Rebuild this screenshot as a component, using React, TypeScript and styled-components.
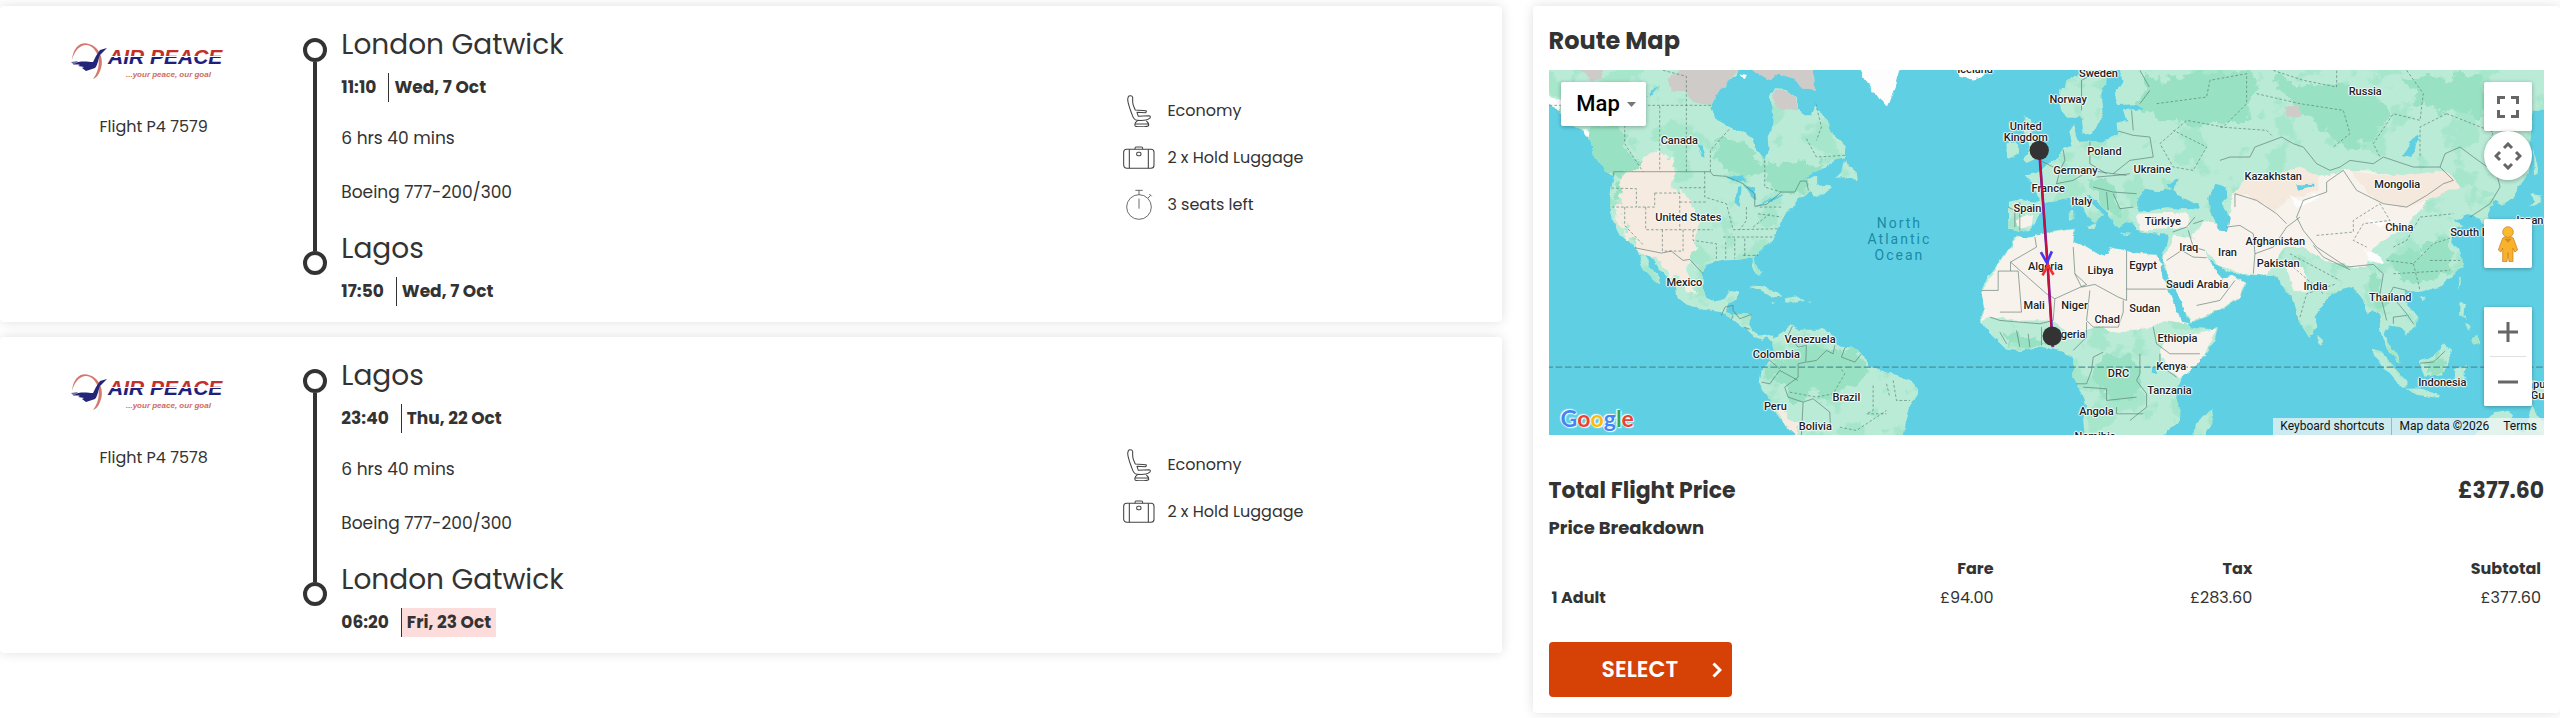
import React from "react";
import styled, { createGlobalStyle } from "styled-components";

const GlobalStyle = createGlobalStyle`
  * { box-sizing: border-box; }
  body {
    margin: 0;
    background: #fff;
    color: #333;
    font-family: Poppins, Inter, "Liberation Sans", sans-serif;
    font-size: 17px;
    line-height: 30px;
  }
  h2, h3, p, ul, dl { margin: 0; padding: 0; }
  button { font: inherit; border: 0; cursor: pointer; }
`;

const Page = styled.main`
  display: grid;
  grid-template-columns: minmax(0, 19fr) minmax(0, 13fr);
  gap: 31px;
  align-items: start;
  padding: 6px 0 5px;
`;

const Flights = styled.div`
  display: flex;
  flex-direction: column;
  gap: 15px;
`;

const Card = styled.section`
  background: #fff;
  border-radius: 4px;
  box-shadow: 0 0 12px rgba(0, 0, 0, 0.13);
`;

const FlightCard = styled(Card)`
  display: grid;
  grid-template-columns: 81fr 219fr 101fr;
`;

const Carrier = styled.div`
  display: flex;
  flex-direction: column;
  align-items: center;
  gap: 25px;
  padding-top: 24px;
`;

const FlightNumber = styled.p`
  padding-left: 4px;
  font-size: 16px;
  line-height: 24px;
`;

const Journey = styled.div`
  display: flex;
  gap: 14px;
`;

const Rail = styled.div`
  display: flex;
  flex-direction: column;
  align-items: center;
  margin: 32px 0 47px;
`;

const Stop = styled.span`
  width: 24px;
  height: 24px;
  border: 4px solid #333;
  border-radius: 50%;
`;

const RailLine = styled.span`
  flex: 1;
  width: 4px;
  background: #333;
`;

const Legs = styled.div`
  display: flex;
  flex-direction: column;
  padding: 18px 0 16px;
`;

const Airport = styled.h2`
  font-size: 28px;
  font-weight: 400;
  line-height: 42px;
`;

const When = styled.p`
  display: flex;
  gap: 12px;
  margin-top: 7px;
  font-weight: 700;
  font-size: 17px;
  line-height: 29px;
`;

const Day = styled.span<{ $late?: boolean }>`
  padding: 0 5px;
  border-left: 1px solid #333;
  background: ${(p) => (p.$late ? "#fddcdc" : "transparent")};
`;

const Facts = styled.div`
  display: flex;
  flex-direction: column;
  gap: 24px;
  margin: 21px 0;
`;

const Features = styled.ul`
  display: flex;
  flex-direction: column;
  justify-content: center;
  gap: 15px;
  padding-bottom: 13px;
  list-style: none;
`;

const Feature = styled.li`
  display: flex;
  align-items: center;
  gap: 12px;
  font-size: 16px;
  line-height: 32px;
`;

const Summary = styled(Card)`
  padding: 14px 16px 16px;
`;

const SummaryTitle = styled.h2`
  font-size: 24px;
  line-height: 42px;
`;

const MapFrame = styled.div`
  position: relative;
  margin-top: 8px;
  aspect-ratio: 995 / 365;
  overflow: hidden;
  background: #5fd0e4;
  font-family: Roboto, "Liberation Sans", sans-serif;
`;

const MapArt = styled.svg`
  display: block;
  width: 100%;
  height: 100%;
`;

const Place = styled.span<{ $ocean?: boolean }>`
  position: absolute;
  transform: translate(-50%, -50%);
  white-space: pre;
  text-align: center;
  font-size: ${(p) => (p.$ocean ? 14 : 11)}px;
  line-height: ${(p) => (p.$ocean ? 16 : 11)}px;
  font-weight: ${(p) => (p.$ocean ? 400 : 500)};
  letter-spacing: ${(p) => (p.$ocean ? "2px" : "normal")};
  color: ${(p) => (p.$ocean ? "#1b8aa3" : "#222")};
  text-shadow: ${(p) =>
    p.$ocean ? "none" : "0 0 2px #fff, 1px 0 1px #fff, -1px 0 1px #fff, 0 1px 1px #fff, 0 -1px 1px #fff"};
`;

const RouteArt = styled(MapArt)`
  position: absolute;
  inset: 0;
`;

const MapButton = styled.button<{ $round?: boolean }>`
  display: flex;
  align-items: center;
  justify-content: center;
  width: 48px;
  height: 49px;
  padding: 0;
  background: #fff;
  border-radius: ${(p) => (p.$round ? "50%" : "2px")};
  box-shadow: 0 1px 4px rgba(0, 0, 0, 0.3);
`;

const MapType = styled(MapButton)`
  position: absolute;
  top: 12px;
  left: 12px;
  width: 85px;
  height: 44px;
  gap: 7px;
  padding-left: 6px;
  color: #000;
  font-size: 22px;
  font-weight: 500;
`;

const MapControls = styled.div`
  position: absolute;
  top: 12px;
  right: 12px;
  display: flex;
  flex-direction: column;
  gap: 39px;
`;

const ViewControls = styled.div`
  display: flex;
  flex-direction: column;
`;

const ZoomControls = styled.div`
  display: flex;
  flex-direction: column;
  align-items: center;
  background: #fff;
  border-radius: 2px;
  box-shadow: 0 1px 4px rgba(0, 0, 0, 0.3);

  ${MapButton} { box-shadow: none; }
`;

const Divider = styled.span`
  width: 36px;
  height: 1px;
  background: #e0e0e0;
`;

const Brand = styled.a`
  position: absolute;
  left: 12px;
  bottom: 2px;
  display: flex;
  font-family: Lato, sans-serif;
  font-size: 23px;
  font-weight: 700;
  line-height: 30px;
  text-decoration: none;
  text-shadow: 0 0 1px #fff, 0 0 2px #fff, 1px 1px 1px #fff, -1px -1px 1px #fff;
`;

const Tint = styled.span<{ $c: string }>`
  color: ${(p) => p.$c};
`;

const Legal = styled.div`
  position: absolute;
  right: 0;
  bottom: 0;
  display: flex;
  gap: 1px;
  font-size: 12px;
  line-height: 17px;
  color: #111;
`;

const LegalItem = styled.a`
  padding: 0 7px;
  background: rgba(245, 245, 245, 0.72);
  color: inherit;
  text-decoration: none;
`;

const LegalGroup = styled.span`
  display: flex;
`;

const Total = styled.div`
  display: flex;
  justify-content: space-between;
  margin-top: 36px;
  font-size: 22px;
  font-weight: 700;
  line-height: 40px;
`;

const TotalLabel = styled.h2`
  font: inherit;
`;

const BreakdownTitle = styled.h3`
  margin-top: 2px;
  font-size: 18px;
  line-height: 30px;
`;

const Breakdown = styled.table`
  width: 100%;
  margin-top: 11px;
  border-collapse: collapse;
  table-layout: fixed;
  font-size: 16px;
  line-height: 29px;

  th, td { padding: 0 3px; text-align: right; }
  th:first-child { width: 16%; text-align: left; }
  th:nth-child(2) { width: 29%; }
  th:nth-child(3) { width: 26%; }
`;

const SelectButton = styled.button`
  display: flex;
  align-items: center;
  justify-content: space-between;
  width: 183px;
  height: 55px;
  margin-top: 30px;
  padding: 0 10px 0 53px;
  border-radius: 4px;
  background: #d64206;
  color: #fff;
  font-size: 22px;
  font-weight: 600;
`;

const AirPeaceLogo = () => (
  <svg width="180" height="60" viewBox="0 0 180 60" role="img" aria-label="Air Peace">
    <defs>
      <linearGradient id="livery" x1="0" y1="0" x2="0" y2="1">
        <stop offset="0.46" stopColor="#c2302c" />
        <stop offset="0.47" stopColor="#fff" />
        <stop offset="0.53" stopColor="#fff" />
        <stop offset="0.54" stopColor="#20207c" />
      </linearGradient>
    </defs>
    <path d="M10 30C11 17 19 11 27 14C38 17 43 31 38 41C36 46 34 48 31 49C38 40 39 27 32 19C25 11 14 15 10 30Z" fill="#d2786c" />
    <path d="M45 18L38 20L34 26L31 32C26 32 18 30 11 34C14 35 16 34 18 35L16 36L22 37L20 38L24 41L33 38C36 35 36 29 38 25Z" fill="#222578" />
    <path d="M9 32L16 31L12 35Z" fill="#6e70a8" />
    <text x="46" y="34" fontFamily="Liberation Sans, sans-serif" fontWeight="700" fontStyle="italic" fontSize="21" fill="url(#livery)">AIR PEACE</text>
    <text x="64" y="47" fontFamily="Liberation Sans, sans-serif" fontWeight="700" fontStyle="italic" fontSize="8" fill="#cf6a62">...your peace, our goal</text>
  </svg>
);

const icons = {
  seat: (
    <svg width="32" height="32" viewBox="0 0 96 96" fill="none" stroke="#444" strokeWidth="3.2" strokeLinejoin="round">
      <path d="M16 5C18 1 27 1 29 7V21C29 30 34 38 37 45L69 47C71 49 70 52 67 53L42 52L46 64L78 62C84 63 83 68 78 71C71 78 59 77 42 76C34 75 30 68 27 58C22 44 15 29 14 13Z" />
      <path d="M43 78C37 81 35 88 36 92C38 96 43 95 55 95C67 95 74 96 77 92C77 87 75 81 70 78M36 87H77" />
    </svg>
  ),
  luggage: (
    <svg width="32" height="32" viewBox="0 0 96 96" fill="none" stroke="#444" strokeWidth="3.2" strokeLinejoin="round">
      <rect x="2" y="22" width="91" height="57" rx="9" />
      <path d="M19 22V79M76 22V79M36 22C36 13 38 15 47 15C57 15 59 13 59 22" />
      <rect x="41" y="31" width="13" height="10" rx="4" />
    </svg>
  ),
  stopwatch: (
    <svg width="32" height="32" viewBox="0 0 96 96" fill="none" stroke="#555" strokeWidth="2.6">
      <circle cx="48" cy="54" r="37" />
      <path d="M48 17V4M37 4H59M48 29V59M75 27L83 19M79 15L86 22" />
    </svg>
  ),
};

type IconName = keyof typeof icons;

interface Flight {
  number: string;
  from: string;
  departs: string;
  departDay: string;
  duration: string;
  aircraft: string;
  to: string;
  arrives: string;
  arriveDay: string;
  nextDay?: boolean;
  features: [IconName, string][];
}

const flights: Flight[] = [
  {
    number: "Flight P4 7579", from: "London Gatwick", departs: "11:10", departDay: "Wed, 7 Oct",
    duration: "6 hrs 40 mins", aircraft: "Boeing 777-200/300",
    to: "Lagos", arrives: "17:50", arriveDay: "Wed, 7 Oct",
    features: [["seat", "Economy"], ["luggage", "2 x Hold Luggage"], ["stopwatch", "3 seats left"]],
  },
  {
    number: "Flight P4 7578", from: "Lagos", departs: "23:40", departDay: "Thu, 22 Oct",
    duration: "6 hrs 40 mins", aircraft: "Boeing 777-200/300",
    to: "London Gatwick", arrives: "06:20", arriveDay: "Fri, 23 Oct", nextDay: true,
    features: [["seat", "Economy"], ["luggage", "2 x Hold Luggage"]],
  },
];

/* Map drawing units: three to a pixel of the map, origin at (28, 29). */
const VIEW = { x: 28, y: 29, w: 2985, h: 1095 };
const VIEW_BOX = `${VIEW.x} ${VIEW.y} ${VIEW.w} ${VIEW.h}`;

const land = [
  // North and Central America
  "M20 20V132L60 148L78 185L105 200L140 215L150 240L165 290L190 330L222 348L212 400L212 440L220 485L240 525L285 560L300 590L312 625L335 655L360 674L352 645L330 615L316 580L332 585L352 615L375 645L405 680L410 708L440 732L480 746L540 755L575 775L610 800L640 828L668 838L682 830L700 850V822L660 828L640 815L628 790L634 762L590 760L556 752L565 730L590 718L597 695L570 692L555 715L525 724L500 712L488 680L490 640L500 612L540 600L600 598L640 588L655 612L668 640L660 650L645 628L638 592L655 575L700 540L712 512L725 485L740 455L765 435L780 412L815 398L822 412L850 398L875 380L855 372L832 372L832 350L790 352L820 335L860 322L885 298L915 290L917 258L885 225L866 195L850 165L828 130L815 165L790 165L775 140L775 112L740 90L700 86L690 110L698 140L702 190L684 225L686 270L675 300L655 275L645 235L600 215L560 195L530 180L515 140L525 110L550 75L590 45L600 20Z",
  "M912 298L928 318L945 322L952 362L930 350L888 352L905 335Z",
  "M625 680L650 672L690 685L727 710L700 710L668 690Z",
  "M738 714L770 708L792 722L770 726L740 726Z",
  "M692 725L706 728L694 730Z",
  "M806 724L816 724L810 728Z",
  // South America
  "M695 838L720 820L742 806L760 795L775 808L850 808L880 830L900 855L935 858L968 880L985 920L1020 930L1080 945L1122 966L1138 992L1122 1018L1110 1040L1100 1080L1090 1130H772L740 1100L710 1060L690 1020L660 970L665 930L690 900L702 870Z",
  // Africa
  "M1430 525L1465 532L1530 515L1605 505L1600 545L1640 560L1690 590L1712 560L1760 572L1800 582L1850 582L1862 612L1880 655L1905 712L1930 770L1955 802L2010 806L2034 800L2022 845L1980 905L1920 960L1905 1000L1922 1040L1920 1080L1880 1110L1870 1130H1635L1630 1080L1636 1040L1628 1000L1600 950V890L1560 872L1500 858L1440 872L1400 868L1350 820L1325 785L1322 765L1332 740L1324 695L1345 650L1370 620L1400 575Z",
  "M2015 1045L2022 1075L1995 1130H1962L1968 1090L1990 1072Z",
  // Europe and Asia
  "M1405 510L1404 424L1440 418L1498 425L1486 378L1455 345L1490 338L1520 318L1550 292L1570 265L1598 258L1588 215L1604 190L1608 225L1620 244L1680 242L1720 232L1733 212L1730 190L1762 182L1752 150L1810 143L1790 132L1732 134L1722 100L1748 62L1738 20H3020V148H2975L2968 330L2945 365L2920 410L2890 432L2862 425L2842 455L2862 490L2830 500L2822 475L2790 462L2740 482L2775 496L2738 508L2734 545L2766 582L2768 612L2740 642L2700 676L2640 694L2596 690L2582 712L2612 742L2635 770L2630 796L2596 826L2586 806L2560 795L2544 792L2534 822L2556 860L2582 908L2560 892L2534 850L2524 810L2518 765L2500 750L2480 755L2462 705L2440 680L2400 690L2376 705L2340 742L2322 768L2332 800L2308 832L2285 798L2270 760L2258 702L2235 695L2218 662L2200 650L2100 645L2060 632L2003 592L2022 625L2050 655L2085 648L2119 670L2100 710L2050 745L2000 770L1948 787L1925 740L1900 690L1865 630L1870 590L1885 520L1830 515L1785 508L1776 480L1762 480L1742 505L1720 490L1700 450L1660 412L1640 402L1660 432L1687 462L1672 478L1665 490L1645 465L1620 432L1592 412L1545 420L1510 430L1490 480L1470 505L1430 515Z",
  "M1645 20L1600 52L1562 82L1558 130L1566 155L1590 176L1620 166L1628 215L1645 228L1670 205L1692 160L1684 100L1715 30V20Z",
  "M1455 168L1470 180L1480 225L1510 262L1500 290L1460 308L1450 298L1468 278L1462 240L1446 200Z",
  "M1400 252L1438 248L1437 280L1400 294Z",
  "M1590 455L1600 452L1600 475L1590 478Z",
  "M1640 495L1670 490L1664 505Z",
  "M1592 430L1598 428L1598 446L1592 444Z",
  "M1740 518L1772 520L1760 524Z",
  "M1850 520L1870 514L1862 526Z",
  "M2333 820L2352 848L2340 860L2332 850Z",
  // South-east Asia, Japan and Australia
  "M2493 864L2520 872L2560 915L2602 962L2602 982L2575 970L2530 920Z",
  "M2600 985L2640 984L2700 1004L2694 1012L2630 1003Z",
  "M2636 905L2680 885L2716 852L2736 868L2722 915L2706 945L2655 948Z",
  "M2745 925L2780 910L2768 935L2780 960L2758 955L2750 985Z",
  "M2762 725L2775 728L2770 762L2782 775L2760 765Z",
  "M2790 840L2812 820L2815 850L2796 855Z",
  "M2775 790L2795 800L2785 815Z",
  "M2752 655L2762 658L2754 684Z",
  "M2634 712L2652 708L2645 724Z",
  "M2970 400L3005 405L3005 425L2968 438L2985 420Z",
  "M2978 262L2986 300L2996 345L2982 345Z",
  "M2978 960L3020 975V1020L2978 995Z",
  "M2830 1090L2862 1055L2905 1048L2920 1060L2900 1095L2950 1120L2980 1035L3000 1075L3020 1095V1130H2800Z",
];

const darkGreen = [
  "M130 210L230 190L262 255L310 320L320 370L285 380L240 350L210 330L180 320Z",
  "M540 230L600 240L660 310L720 310L860 300L830 330L780 400L720 390L640 340L560 330L515 300Z",
  "M225 350L250 360L240 420L220 420Z",
  "M760 860L960 870L980 930L940 970L880 1000L760 1020L690 950L700 900Z",
  "M1680 890L1780 880L1800 960L1780 1020L1700 1010L1670 950Z",
  "M1390 830L1470 830L1540 850L1480 862L1410 860Z",
  "M1820 60L2080 20L2160 60L2120 170L1980 190L1860 180L1800 150Z",
  "M2180 60L2480 80L2540 160L2480 260L2380 240L2260 130Z",
  "M2560 60L2820 40L2840 160L2680 150Z",
  "M2540 590L2720 540L2740 620L2640 680L2560 640Z",
  "M2470 640L2520 630L2540 720L2500 730Z",
  "M2650 900L2710 880L2710 930L2660 935Z",
  "M1650 360L1700 360L1750 440L1720 460L1680 420Z",
];

const sand = [
  "M245 350L290 335L340 290L400 290L410 330L420 400L455 430L488 500L470 570L440 620L470 690L440 690L380 620L340 575L300 565L250 520L240 440Z",
  "M690 1020L720 1055L780 1080L785 1124L760 1124L720 1085Z",
];

const desert = [
  "M1432 530L1530 518L1600 508L1602 545L1640 562L1690 590L1712 562L1850 585L1862 615L1905 715L1945 790L1880 780L1840 800L1740 815L1660 800L1600 825L1530 780L1420 780L1345 770L1326 782L1332 740L1325 696L1372 622Z",
  "M1870 600L1900 525L1990 540L2005 592L2060 636L2115 668L2098 708L2040 748L1950 784L1902 690Z",
  "M1960 530L1990 480L2060 500L2080 400L2130 345L2220 340L2280 320L2340 350L2420 330L2480 330L2560 350L2700 340L2740 370L2660 420L2600 500L2500 560L2480 620L2440 620L2360 600L2290 560L2230 560L2180 650L2100 640L2040 615Z",
  "M1880 840L2030 804L1985 900L1920 958L1880 920L1860 870Z",
  "M1790 460L1940 456L1950 500L1800 508Z",
  "M2235 600L2290 620L2300 700L2260 690Z",
  "M1430 480L1480 460L1475 495L1440 505Z",
];

const seas = [
  // Black Sea, Caspian, Red Sea, lakes
  "M1795 420L1812 385L1850 392L1880 385L1905 392L1925 410L1975 430L1980 448L1930 446L1880 440L1830 452L1795 450Z",
  "M1882 375L1915 355L1900 388Z",
  "M2005 410L2030 370L2060 380L2062 412L2045 430L2070 470L2062 512L2035 510L2025 480L2010 450Z",
  "M1858 618L1868 612L1900 670L1930 735L1942 785L1925 782L1900 720Z",
  "M2585 290L2600 270L2630 222L2638 240L2620 275L2592 292Z",
  "M560 350L610 345L625 365L580 362Z",
  "M592 380L606 375L600 440L588 430Z",
  "M612 370L645 385L650 420L640 415Z",
  "M645 438L735 398L700 425Z",
  "M470 255L485 260L498 292L488 290Z",
  "M320 108L360 74L340 100Z",
  "M2268 372L2320 370L2320 376L2275 388Z",
  "M1838 920L1855 922L1850 942L1835 940Z",
];

const ice = [
  "M958 20H1084L1068 78L1045 138L1015 118L992 82Z",
  "M1255 20H1345L1325 50L1298 58L1262 46Z",
  "M20 105L62 120L60 150L28 132Z",
  "M130 205L152 215L150 235L135 220Z",
  "M600 45L625 50L615 62Z",
  "M2250 410L2290 420L2330 400L2340 410L2270 445Z",
  "M2470 565L2520 590L2530 612L2490 600Z",
  "M2480 475L2540 490L2520 500Z",
];

const tundra = [
  "M120 20H185L190 55L150 62Z",
  "M385 60L430 20H600L560 70L525 110L515 135L450 120L440 95L400 95Z",
  "M620 20H822L826 88L795 85L760 55L720 40L690 60Z",
  "M700 90L740 92L772 112L775 150L720 145L702 130Z",
  "M2230 140L2280 135L2285 165L2245 175Z",
];

const borders =
  "M222 348V334H512L520 345L560 348L610 370L645 400L645 438L680 432L725 395H765L782 362L800 362L806 390 " +
  "M285 562L365 578L395 572L430 600L450 597L490 640 M545 765L556 740L580 735V750L600 775L635 762 M580 765L575 778 M612 800L630 806 " +
  "M758 797L745 825L775 860L800 855L798 905L775 910V950L735 980L745 1010L790 1025L785 1125 M800 905L830 900L860 870L880 880L885 855 M905 890L915 862 M965 880L945 905L905 890 M665 965L690 970L720 930L775 960 M790 1025L820 1015L870 1055L872 1100 M690 900L720 925 " +
  "M1485 530L1490 560L1412 605L1520 700L1545 715L1640 672L1605 640L1600 560 M1412 605V632H1375V690H1325 M1412 632H1435L1445 755H1380 M1605 640L1625 680L1665 672L1735 710L1760 720V572 M1760 686H1880 M1750 720V755L1735 800L1660 800L1640 780L1650 690 M1545 715L1540 780L1500 790L1380 780L1350 770 M1640 785L1640 830L1600 870 M1840 800L1850 850L1890 880L1980 880 M1690 875L1660 890L1655 930L1640 970H1610 M1800 880V940L1790 960L1820 1000V1040L1770 1080 M1630 980L1700 985V1020L1790 1010 M1730 1040V1060H1810 M1860 880V915L1910 950 M1380 815L1400 850 M1430 810L1440 860 M1465 820L1470 860 M1505 800V855 " +
  "M1898 515L1940 500L1965 470 M1880 600L1925 570L1960 590L2000 592 M1945 510L1960 560L1995 570 M1970 735L2040 720L2085 660 M1960 490L1990 480 M2060 500L2100 495L2140 520L2145 580L2140 640 M2085 440V400L2150 420L2210 460L2240 490 M2145 580L2200 560L2240 500L2280 470 " +
  "M2040 300L2070 290H2130L2145 260L2225 230L2260 250L2290 260L2330 310L2370 330L2400 320L2430 300L2500 310L2530 290L2620 320L2700 320L2715 280L2760 260L2800 290L2870 340L2880 380L2850 430L2790 470 M2410 330L2450 390L2530 430L2600 440L2660 405L2710 370L2740 360L2700 320 M2410 330L2360 365V395L2290 420L2270 470L2290 510L2330 560L2420 620L2500 612L2530 640L2520 700L2540 780 M2320 555L2350 590L2430 628 M2600 690L2560 680L2550 700L2600 760L2620 790 M2560 790V770L2600 765 M2640 908L2680 905L2715 872 " +
  "M1500 300L1560 330L1550 370L1600 360L1650 330L1720 340L1760 345 M1570 268L1575 300L1560 330 M1650 245L1650 310L1700 340 M1735 212L1780 225L1830 230L1840 290L1770 300L1720 340 M1780 210L1775 150 M1670 350L1730 345L1770 340 M1660 380L1720 395L1790 400 M1700 395L1705 450 M1720 400L1740 445L1780 440 M1830 90L1800 130M1800 30L1828 80 M1625 150V60L1690 25 M1440 425V510 M1404 440L1425 450V500";

const states =
  "M370 30L440 48V334 M255 180V250L310 334 M30 135H520 M360 137V334 M512 334V270L570 205 M675 300V380L725 395 M800 235L830 290L915 285 M828 130L845 200L830 240 M215 383L290 385V440H218 M255 440V495L312 555 M318 440V508H518 M345 398V440H290 M345 398H420V508 M368 508V575 M420 382H495 M430 508V572H375 M420 425H500 M495 334V410L560 430L580 508L720 505 M460 508V540L530 550V598 M550 530H700 M558 545V595 M585 535V595 M615 535V590 M620 440V480L600 508 M660 440H725 M655 460L725 470 M640 500L690 460 M610 585H655 " +
  "M750 995L830 1010L880 1000L915 940L900 920 M1000 975V1050L980 1060H1040 M900 1100L950 1110L1040 1050 M1060 960L1070 1020L1110 1020 M1040 970L1050 1010 " +
  "M1850 130L2000 110L2010 60L2120 40V130L2050 200L1940 180L1860 250L1900 320L1960 330L2000 260L1900 210 M2200 30L2290 60L2390 80V30 M2150 100L2280 130L2410 150L2430 220L2380 260 M2040 200L2180 210L2200 230 M2600 30L2650 100L2640 180L2560 160L2500 250L2520 290 M2720 160L2860 215L2840 260 M2720 160L2640 200V290 M2330 525L2440 515V480L2520 430L2550 480L2470 490L2440 540L2480 560 M2560 560L2600 540L2640 470L2740 460 M2540 600L2620 610L2680 550L2740 530 M2620 610L2640 690 M2560 640L2730 630 M2670 600L2760 600 M2260 620L2350 700 M2280 770L2300 700L2390 670 M2250 580L2400 660";

interface Label {
  text: string;
  x: number;
  y: number;
  ocean?: boolean;
}

const labels: Label[] = [
  { text: "Canada", x: 420, y: 240 },
  { text: "United States", x: 447, y: 470 },
  { text: "Mexico", x: 435, y: 666 },
  { text: "Venezuela", x: 812, y: 835 },
  { text: "Colombia", x: 711, y: 881 },
  { text: "Brazil", x: 921, y: 1011 },
  { text: "Peru", x: 708, y: 1037 },
  { text: "Bolivia", x: 828, y: 1097 },
  { text: "North\nAtlantic\nOcean", x: 1080, y: 537, ocean: true },
  { text: "Iceland", x: 1307, y: 26 },
  { text: "Sweden", x: 1677, y: 38 },
  { text: "Norway", x: 1586, y: 116 },
  { text: "United\nKingdom", x: 1459, y: 214 },
  { text: "Poland", x: 1695, y: 271 },
  { text: "Germany", x: 1608, y: 328 },
  { text: "Ukraine", x: 1838, y: 325 },
  { text: "France", x: 1526, y: 382 },
  { text: "Italy", x: 1627, y: 422 },
  { text: "Spain", x: 1464, y: 443 },
  { text: "Türkiye", x: 1870, y: 481 },
  { text: "Iraq", x: 1948, y: 560 },
  { text: "Iran", x: 2064, y: 575 },
  { text: "Algeria", x: 1518, y: 617 },
  { text: "Libya", x: 1683, y: 630 },
  { text: "Egypt", x: 1811, y: 613 },
  { text: "Saudi Arabia", x: 1973, y: 670 },
  { text: "Mali", x: 1484, y: 733 },
  { text: "Niger", x: 1605, y: 734 },
  { text: "Sudan", x: 1816, y: 743 },
  { text: "Chad", x: 1703, y: 775 },
  { text: "Nigeria", x: 1585, y: 822 },
  { text: "Ethiopia", x: 1914, y: 833 },
  { text: "Kenya", x: 1895, y: 917 },
  { text: "DRC", x: 1737, y: 938 },
  { text: "Tanzania", x: 1890, y: 988 },
  { text: "Angola", x: 1671, y: 1053 },
  { text: "Namibia", x: 1667, y: 1126 },
  { text: "Russia", x: 2477, y: 91 },
  { text: "Kazakhstan", x: 2201, y: 348 },
  { text: "Mongolia", x: 2573, y: 370 },
  { text: "China", x: 2579, y: 501 },
  { text: "Afghanistan", x: 2207, y: 542 },
  { text: "Pakistan", x: 2216, y: 607 },
  { text: "India", x: 2328, y: 677 },
  { text: "Thailand", x: 2552, y: 710 },
  { text: "South Korea", x: 2822, y: 516 },
  { text: "Japan", x: 2966, y: 478 },
  { text: "Indonesia", x: 2708, y: 964 },
  { text: "Papua New\nGuinea", x: 3025, y: 988 },
];

const Shapes = ({ paths, fill }: { paths: string[]; fill: string }) => (
  <g fill={fill}>{paths.map((d) => <path key={d} d={d} />)}</g>
);

const WorldMap = () => (
  <MapArt viewBox={VIEW_BOX} preserveAspectRatio="xMidYMid slice" aria-hidden="true">
    <defs>
      <filter id="coast" x="0" y="0" width="3040" height="1140" filterUnits="userSpaceOnUse" colorInterpolationFilters="sRGB">
        <feTurbulence type="fractalNoise" baseFrequency="0.03" numOctaves="3" seed="4" />
        <feDisplacementMap in="SourceGraphic" scale="18" xChannelSelector="R" yChannelSelector="G" />
      </filter>
      <filter id="patchy" x="0" y="0" width="3040" height="1140" filterUnits="userSpaceOnUse" colorInterpolationFilters="sRGB">
        <feTurbulence type="fractalNoise" baseFrequency="0.02" numOctaves="4" seed="9" />
        <feDisplacementMap in="SourceGraphic" scale="75" xChannelSelector="R" yChannelSelector="G" />
      </filter>
      <filter id="forest" x="0" y="0" width="3040" height="1140" filterUnits="userSpaceOnUse" colorInterpolationFilters="sRGB">
        <feTurbulence type="fractalNoise" baseFrequency="0.011" numOctaves="5" seed="12" />
        <feColorMatrix values="0 0 0 0 0.6  0 0 0 0 0.89  0 0 0 0 0.77  14 0 0 0 -7.9" />
      </filter>
      <clipPath id="ground">{land.map((d) => <path key={d} d={d} />)}</clipPath>
    </defs>
    <g filter="url(#coast)">
      <Shapes paths={land} fill="#b9ebd7" />
      <g clipPath="url(#ground)">
        <rect x="0" y="0" width="3040" height="1140" filter="url(#forest)" opacity="0.6" />
        <g filter="url(#patchy)">
          <Shapes paths={darkGreen} fill="#98e2c3" />
          <Shapes paths={sand} fill="#f5ebe0" />
        </g>
        <Shapes paths={desert} fill="#f7f2eb" />
        <path d="M2080 400L2130 345L2220 340L2280 320L2340 350L2330 390L2260 410L2200 450L2130 410Z M2430 330L2560 350L2720 330L2760 380L2680 410L2600 440L2500 420Z" fill="#f5e8dc" />
      </g>
      <Shapes paths={tundra} fill="#cfcbc9" />
      <Shapes paths={ice} fill="#fdfdfd" />
      <Shapes paths={seas} fill="#5fd0e4" />
      <path d="M690 140L675 300L655 275L645 235L560 195L515 150L540 100L600 50L640 70L690 90Z" fill="#5fd0e4" />
    </g>
    <g fill="none" stroke="#53706a" strokeWidth="2.4" strokeOpacity="0.75" strokeLinejoin="round">
      <path d={borders} />
      <path d={states} strokeDasharray="8 6" />
    </g>
    <path d="M20 920H3020" stroke="#4c8f98" strokeWidth="4" strokeDasharray="20 8" />
  </MapArt>
);

const RouteLine = () => (
  <RouteArt viewBox={VIEW_BOX} preserveAspectRatio="xMidYMid slice" aria-hidden="true">
    <path d="M1498 270L1523 610L1539 860" fill="none" stroke="#5a2bd0" strokeWidth="8" />
    <path d="M1498 270L1523 610L1538 858" fill="none" stroke="#c4103f" strokeWidth="6" />
    <path d="M1503 575L1521 607L1536 573" fill="none" stroke="#4a35f0" strokeWidth="8" />
    <path d="M1508 645L1524 615L1541 643" fill="none" stroke="#f03030" strokeWidth="8" />
    <circle cx="1498" cy="270" r="29" fill="#333" />
    <circle cx="1537" cy="827" r="29" fill="#333" />
  </RouteArt>
);

const RouteMap = () => (
  <MapFrame>
    <WorldMap />
    {labels.map((l) => (
      <Place
        key={l.text}
        $ocean={l.ocean}
        style={{
          left: `${((l.x - VIEW.x) / VIEW.w) * 100}%`,
          top: `${((l.y - VIEW.y) / VIEW.h) * 100}%`,
        }}
      >
        {l.text}
      </Place>
    ))}
    <RouteLine />
    <MapType type="button">
      Map
      <svg width="9" height="5" viewBox="0 0 9 5" aria-hidden="true"><path d="M0 0H9L4.5 5Z" fill="#777" /></svg>
    </MapType>
    <MapControls>
      <ViewControls>
        <MapButton type="button" aria-label="Toggle fullscreen view">
          <svg width="22" height="22" viewBox="0 0 22 22" fill="none" stroke="#666" strokeWidth="3">
            <path d="M1.500 8V1.500H8M14 1.500H20.500V8M20.500 14V20.500H14M8 20.500H1.500V14" />
          </svg>
        </MapButton>
        <MapButton type="button" $round aria-label="Map camera controls">
          <svg width="28" height="28" viewBox="0 0 28 28" fill="none" stroke="#666" strokeWidth="3">
            <path d="M10 6L14 2L18 6M10 22L14 26L18 22M6 10L2 14L6 18M22 10L26 14L22 18" />
          </svg>
        </MapButton>
      </ViewControls>
      <MapButton type="button" aria-label="Street View">
        <svg width="20" height="36" viewBox="0 0 60 108" stroke="#c17a1c" strokeWidth="2">
          <path d="M14 36C22 30 38 30 46 36L59 72L50 78L45 66V107H33L30 80L27 107H14V66L9 78L1 72Z" fill="#f9b22b" />
          <path d="M19 38H41L30 50Z" fill="#d98a1c" stroke="none" />
          <circle cx="30" cy="18" r="16" fill="#fbb92e" />
        </svg>
      </MapButton>
      <ZoomControls>
        <MapButton type="button" aria-label="Zoom in">
          <svg width="20" height="20" viewBox="0 0 20 20" stroke="#666" strokeWidth="3"><path d="M0 10H20M10 0V20" /></svg>
        </MapButton>
        <Divider />
        <MapButton type="button" aria-label="Zoom out">
          <svg width="20" height="20" viewBox="0 0 20 20" stroke="#666" strokeWidth="3"><path d="M0 10H20" /></svg>
        </MapButton>
      </ZoomControls>
    </MapControls>
    <Brand href="#map">
      <Tint $c="#4285f4">G</Tint>
      <Tint $c="#ea4335">o</Tint>
      <Tint $c="#fbbc05">o</Tint>
      <Tint $c="#4285f4">g</Tint>
      <Tint $c="#34a853">l</Tint>
      <Tint $c="#ea4335">e</Tint>
    </Brand>
    <Legal>
      <LegalItem href="#shortcuts">Keyboard shortcuts</LegalItem>
      <LegalGroup>
        <LegalItem as="span">Map data ©2026</LegalItem>
        <LegalItem href="#terms">Terms</LegalItem>
      </LegalGroup>
    </Legal>
  </MapFrame>
);

const FlightLeg = ({ flight }: { flight: Flight }) => (
  <FlightCard>
    <Carrier>
      <AirPeaceLogo />
      <FlightNumber>{flight.number}</FlightNumber>
    </Carrier>
    <Journey>
      <Rail>
        <Stop />
        <RailLine />
        <Stop />
      </Rail>
      <Legs>
        <Airport>{flight.from}</Airport>
        <When>
          {flight.departs}
          <Day>{flight.departDay}</Day>
        </When>
        <Facts>
          <p>{flight.duration}</p>
          <p>{flight.aircraft}</p>
        </Facts>
        <Airport>{flight.to}</Airport>
        <When>
          {flight.arrives}
          <Day $late={flight.nextDay}>{flight.arriveDay}</Day>
        </When>
      </Legs>
    </Journey>
    <Features>
      {flight.features.map(([icon, text]) => (
        <Feature key={text}>
          {icons[icon]}
          {text}
        </Feature>
      ))}
    </Features>
  </FlightCard>
);

export default function App() {
  return (
    <>
      <GlobalStyle />
      <Page>
        <Flights>
          {flights.map((f) => <FlightLeg key={f.number} flight={f} />)}
        </Flights>
        <Summary>
          <SummaryTitle>Route Map</SummaryTitle>
          <RouteMap />
          <Total>
            <TotalLabel>Total Flight Price</TotalLabel>
            <span>£377.60</span>
          </Total>
          <BreakdownTitle>Price Breakdown</BreakdownTitle>
          <Breakdown>
            <thead>
              <tr>
                <th aria-label="Passengers" />
                <th scope="col">Fare</th>
                <th scope="col">Tax</th>
                <th scope="col">Subtotal</th>
              </tr>
            </thead>
            <tbody>
              <tr>
                <th scope="row">1 Adult</th>
                <td>£94.00</td>
                <td>£283.60</td>
                <td>£377.60</td>
              </tr>
            </tbody>
          </Breakdown>
          <SelectButton type="button">
            SELECT
            <svg width="10" height="16" viewBox="0 0 10 16" fill="none" stroke="#fff" strokeWidth="3" aria-hidden="true">
              <path d="M1.500 1.500L8 8L1.500 14.500" />
            </svg>
          </SelectButton>
        </Summary>
      </Page>
    </>
  );
}
